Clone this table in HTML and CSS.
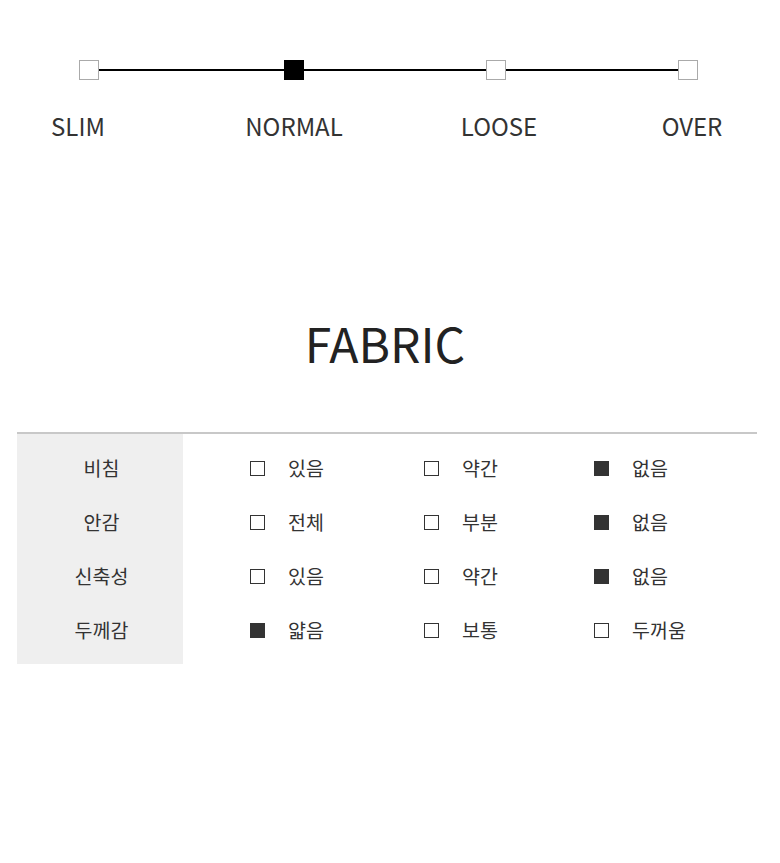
FILE: index.html
```html
<!DOCTYPE html>
<html lang="ko">
<head>
<meta charset="utf-8">
<link rel="stylesheet" href="styles.css">
</head>
<body>
<div class="page">
  <section class="fit">
    <div class="track">
      <span class="dot"></span>
      <span class="seg seg-1"></span>
      <span class="dot dot-on"></span>
      <span class="seg seg-2"></span>
      <span class="dot"></span>
      <span class="seg seg-3"></span>
      <span class="dot"></span>
    </div>
    <div class="labels">
      <span class="lbl lbl-1">SLIM</span>
      <span class="lbl lbl-2">NORMAL</span>
      <span class="lbl lbl-3">LOOSE</span>
      <span class="lbl lbl-4">OVER</span>
    </div>
  </section>

  <h2 class="title">FABRIC</h2>

  <div class="table">
    <div class="head">비침</div>
    <div class="opt"><i class="box"></i>있음</div>
    <div class="opt"><i class="box"></i>약간</div>
    <div class="opt"><i class="box on"></i>없음</div>

    <div class="head">안감</div>
    <div class="opt"><i class="box"></i>전체</div>
    <div class="opt"><i class="box"></i>부분</div>
    <div class="opt"><i class="box on"></i>없음</div>

    <div class="head">신축성</div>
    <div class="opt"><i class="box"></i>있음</div>
    <div class="opt"><i class="box"></i>약간</div>
    <div class="opt"><i class="box on"></i>없음</div>

    <div class="head">두께감</div>
    <div class="opt"><i class="box on"></i>얇음</div>
    <div class="opt"><i class="box"></i>보통</div>
    <div class="opt"><i class="box"></i>두꺼움</div>
  </div>
</div>
</body>
</html>
```

FILE: styles.css
```css
* { box-sizing: border-box; }
html, body { margin: 0; padding: 0; background: #fff; }
body {
  font-family: "Noto Sans CJK KR", "Noto Sans", sans-serif;
  color: #333;
  width: 780px;
  height: 863px;
  overflow: hidden;
}
.page { padding-top: 59px; }

.track {
  display: flex;
  align-items: center;
  padding-left: 79px;
  height: 21px;
}
.dot {
  width: 20px;
  height: 20px;
  border: 1px solid #aaa;
  background: #fff;
  flex: none;
}
.dot-on { background: #000; border-color: #000; }
.seg { height: 2px; background: #000; flex: none; }
.seg-1 { width: 185px; }
.seg-2 { width: 182px; }
.seg-3 { width: 172px; }

.labels {
  display: flex;
  margin-top: 28px;
  font-size: 24px;
  line-height: 35px;
  color: #333;
}
.lbl { width: 120px; text-align: center; flex: none; }
.lbl-1 { margin-left: 18px; }
.lbl-2 { margin-left: 96px; }
.lbl-3 { margin-left: 85px; }
.lbl-4 { margin-left: 73px; }

.title {
  margin: 169px 0 0;
  padding-right: 10px;
  text-align: center;
  font-weight: 400;
  font-size: 48px;
  line-height: 60px;
  color: #222;
}

.table {
  margin: 60px 23px 0 17px;
  border-top: 2px solid #c8c8c8;
  display: grid;
  grid-template-columns: 166px 241px 170px 1fr;
  grid-auto-rows: 54px;
  padding: 6px 0 8px;
  background: linear-gradient(to right, #efefef 166px, #fff 166px);
  font-size: 19.5px;
}
.head {
  display: flex;
  align-items: center;
  justify-content: center;
  padding-left: 3px;
  color: #333;
}
.opt {
  display: flex;
  align-items: center;
  gap: 23px;
  color: #333;
}
.head + .opt { padding-left: 67px; }
.box {
  width: 15px;
  height: 15px;
  border: 1.5px solid #333;
  flex: none;
  margin-top: 2px;
}
.box.on { background: #333; }
```
